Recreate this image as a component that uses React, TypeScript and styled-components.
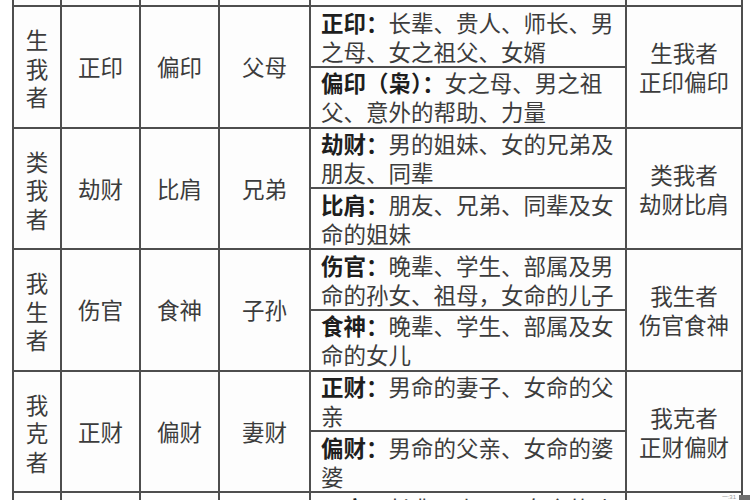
import styled, { createGlobalStyle } from 'styled-components';

const GlobalStyle = createGlobalStyle`
  html, body {
    margin: 0;
    padding: 0;
    background: #ffffff;
  }
  body {
    font-family: "Noto Sans CJK SC", "Noto Sans", sans-serif;
    color: #3c3c3c;
  }
`;

type Note = { label: string; lines: string[] };

type Group = {
  relation: string;
  yang: string;
  yin: string;
  kin: string;
  notes: Note[];
  summary: string[];
};

const groups: Group[] = [
  {
    relation: '生我者',
    yang: '正印',
    yin: '偏印',
    kin: '父母',
    notes: [
      { label: '正印：', lines: ['长辈、贵人、师长、男', '之母、女之祖父、女婿'] },
      { label: '偏印（枭）：', lines: ['女之母、男之祖', '父、意外的帮助、力量'] },
    ],
    summary: ['生我者', '正印偏印'],
  },
  {
    relation: '类我者',
    yang: '劫财',
    yin: '比肩',
    kin: '兄弟',
    notes: [
      { label: '劫财：', lines: ['男的姐妹、女的兄弟及', '朋友、同辈'] },
      { label: '比肩：', lines: ['朋友、兄弟、同辈及女', '命的姐妹'] },
    ],
    summary: ['类我者', '劫财比肩'],
  },
  {
    relation: '我生者',
    yang: '伤官',
    yin: '食神',
    kin: '子孙',
    notes: [
      { label: '伤官：', lines: ['晚辈、学生、部属及男', '命的孙女、祖母，女命的儿子'] },
      { label: '食神：', lines: ['晚辈、学生、部属及女', '命的女儿'] },
    ],
    summary: ['我生者', '伤官食神'],
  },
  {
    relation: '我克者',
    yang: '正财',
    yin: '偏财',
    kin: '妻财',
    notes: [
      { label: '正财：', lines: ['男命的妻子、女命的父', '亲'] },
      { label: '偏财：', lines: ['男命的父亲、女命的婆', '婆'] },
    ],
    summary: ['我克者', '正财偏财'],
  },
];

const Page = styled.div`
  position: relative;
  width: 750px;
  height: 500px;
  overflow: hidden;
`;

const Sheet = styled.div`
  display: grid;
  grid-template-columns: 46px 77px 77px 89px 314px 114px;
  grid-template-rows: 5px repeat(8, 58.75px) 1fr;
  gap: 2px;
  padding: 0 2px;
  margin-left: 12px;
  width: fit-content;
  height: 500px;
  background: #4e4e4e;
`;

const Cell = styled.div<{ $span?: boolean }>`
  grid-row: ${(p) => (p.$span ? 'span 2' : 'auto')};
  min-height: 0;
  overflow: hidden;
  background: #fdfdfd;
  display: flex;
  align-items: center;
  justify-content: center;
  font-size: 22.5px;
  line-height: 29px;
`;

const RelationCell = styled(Cell)`
  flex-direction: column;
  padding-top: 2px;
`;

const RelationChar = styled.div`
  height: 28.5px;
  line-height: 28.5px;
`;

const SummaryCell = styled(Cell)`
  flex-direction: column;
  padding-top: 1px;
`;

const NoteCell = styled(Cell)`
  display: block;
  padding: 0.5px 0 0 10px;
  line-height: 29px;
  white-space: nowrap;
`;

const Line = styled.div`
  display: block;
`;

const Label = styled.b`
  font-weight: 700;
  color: #1e1e1e;
`;

const Stamp = styled.div`
  position: absolute;
  right: 0;
  bottom: 0;
  display: flex;
  align-items: flex-end;
  gap: 3px;
  font-family: "Liberation Sans", sans-serif;
  font-size: 6px;
  line-height: 6px;
  color: #9a9a9a;
`;

const StampBlock = styled.span`
  display: block;
  width: 11px;
  height: 5px;
  background: #6f6f6f;
`;

function NoteBlock({ note }: { note: Note }) {
  return (
    <NoteCell>
      {note.lines.map((line, i) => (
        <Line key={i}>
          {i === 0 && <Label>{note.label}</Label>}
          {line}
        </Line>
      ))}
    </NoteCell>
  );
}

function GroupRows({ group }: { group: Group }) {
  return (
    <>
      <RelationCell $span>
        {group.relation.split('').map((ch, i) => (
          <RelationChar key={i}>{ch}</RelationChar>
        ))}
      </RelationCell>
      <Cell $span>{group.yang}</Cell>
      <Cell $span>{group.yin}</Cell>
      <Cell $span>{group.kin}</Cell>
      <NoteBlock note={group.notes[0]} />
      <SummaryCell $span>
        {group.summary.map((s, i) => (
          <Line key={i}>{s}</Line>
        ))}
      </SummaryCell>
      <NoteBlock note={group.notes[1]} />
    </>
  );
}

export default function App() {
  return (
    <Page>
      <GlobalStyle />
      <Sheet>
        <Cell />
        <Cell />
        <Cell />
        <Cell />
        <Cell />
        <Cell />
        {groups.map((g) => (
          <GroupRows key={g.relation} group={g} />
        ))}
        <Cell />
        <Cell />
        <Cell />
        <Cell />
        <NoteCell>
          <Line>
            <Label>正官：</Label>长辈、上司、女命的丈
          </Line>
        </NoteCell>
        <Cell />
      </Sheet>
      <Stamp>
        <span>一:31</span>
        <StampBlock />
      </Stamp>
    </Page>
  );
}
